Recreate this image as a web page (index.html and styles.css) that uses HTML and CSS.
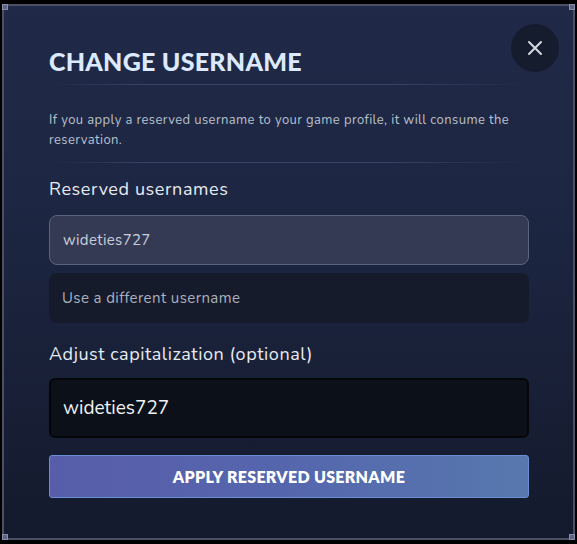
FILE: index.html
```html
<!DOCTYPE html>
<html>
<head>
<meta charset="utf-8">
<link rel="stylesheet" href="styles.css">
</head>
<body>
<div class="modal">
  <span class="corner tl"></span><span class="corner tr"></span><span class="corner bl"></span><span class="corner br"></span>
  <button class="close" aria-label="Close">
    <svg width="16" height="16" viewBox="0 0 16 16"><path d="M2 2L14 14M14 2L2 14" stroke="#d3d9e3" stroke-width="2" stroke-linecap="round"/></svg>
  </button>
  <h1 class="title">CHANGE USERNAME</h1>
  <div class="sep"></div>
  <p class="desc">If you apply a reserved username to your game profile, it will consume the reservation.</p>
  <div class="sep sep2"></div>
  <div class="label">Reserved usernames</div>
  <div class="option selected">wideties727</div>
  <div class="option other">Use a different username</div>
  <div class="label label2">Adjust capitalization (optional)</div>
  <div class="input">wideties727</div>
  <button class="apply">APPLY RESERVED USERNAME</button>
</div>
</body>
</html>
```
FILE: styles.css
```css
html, body {
  margin: 0;
  padding: 0;
  background: #000;
}
body {
  width: 577px;
  height: 544px;
  overflow: hidden;
  font-family: "Nunito", Lato, "Open Sans", sans-serif;
}
.modal {
  position: relative;
  box-sizing: border-box;
  margin: 4px 2px 0 2px;
  width: 573px;
  height: 536px;
  border: 2px solid #4b5162;
  background: linear-gradient(180deg, #202a48 0%, #1c2540 45%, #141a2d 100%);
  padding: 37px 44px 0 45px;
  display: flex;
  flex-direction: column;
}
.corner {
  position: absolute;
  width: 6px;
  height: 6px;
  background: #5d6685;
  border: 1px solid #858dab;
  box-sizing: border-box;
}
.corner.tl { left: -2px; top: -2px; }
.corner.tr { right: -2px; top: -2px; }
.corner.bl { left: -2px; bottom: -2px; }
.corner.br { right: -2px; bottom: -2px; }
.close {
  position: absolute;
  top: 18px;
  right: 14px;
  width: 48px;
  height: 48px;
  border-radius: 50%;
  border: none;
  background: #151c2e;
  padding: 0;
  display: flex;
  align-items: center;
  justify-content: center;
}
.title {
  margin: 0;
  font-family: Lato, sans-serif;
  font-weight: 900;
  font-size: 25px;
  line-height: 36px;
  letter-spacing: 0.25px;
  color: #dce9ff;
}
.sep {
  height: 1px;
  margin-top: 5px;
  background: linear-gradient(90deg, rgba(60,72,104,0) 0%, rgba(60,72,104,0.9) 20%, rgba(60,72,104,0.9) 70%, rgba(60,72,104,0) 100%);
}
.desc {
  margin: 25px 0 0 0;
  font-size: 13px;
  line-height: 20px;
  letter-spacing: 0.4px;
  color: #b9c0cc;
}
.sep2 {
  margin-top: 12px;
}
.label {
  margin-top: 14px;
  font-size: 18px;
  line-height: 24px;
  letter-spacing: 0.6px;
  color: #e8ebf1;
}
.option {
  box-sizing: border-box;
  height: 50px;
  border-radius: 8px;
  display: flex;
  align-items: center;
  padding-left: 13px;
  font-size: 15px;
  letter-spacing: 0.35px;
}
.option.selected {
  margin-top: 14px;
  background: #343a53;
  border: 1px solid #5b647a;
  color: #c9cfda;
}
.option.other {
  margin-top: 8px;
  background: #161b2c;
  color: #abb1bd;
  font-size: 15px;
  letter-spacing: 0.4px;
}
.label2 {
  margin-top: 19px;
  letter-spacing: 0.55px;
}
.input {
  box-sizing: border-box;
  margin-top: 12px;
  height: 60px;
  background: #0c1019;
  border: 2px solid #040609;
  border-radius: 6px;
  display: flex;
  align-items: center;
  padding-left: 12px;
  font-size: 19px;
  color: #f0f2f6;
}
.apply {
  margin-top: 17px;
  height: 43px;
  box-sizing: border-box;
  border: 1px solid #6a8ed4;
  border-radius: 3px;
  background: linear-gradient(90deg, #585da9 0%, #5566ad 50%, #5778ae 100%);
  color: #fff;
  font-family: Lato, sans-serif;
  font-weight: 800;
  font-size: 16px;
  letter-spacing: 0.3px;
  padding: 0;
}
```
